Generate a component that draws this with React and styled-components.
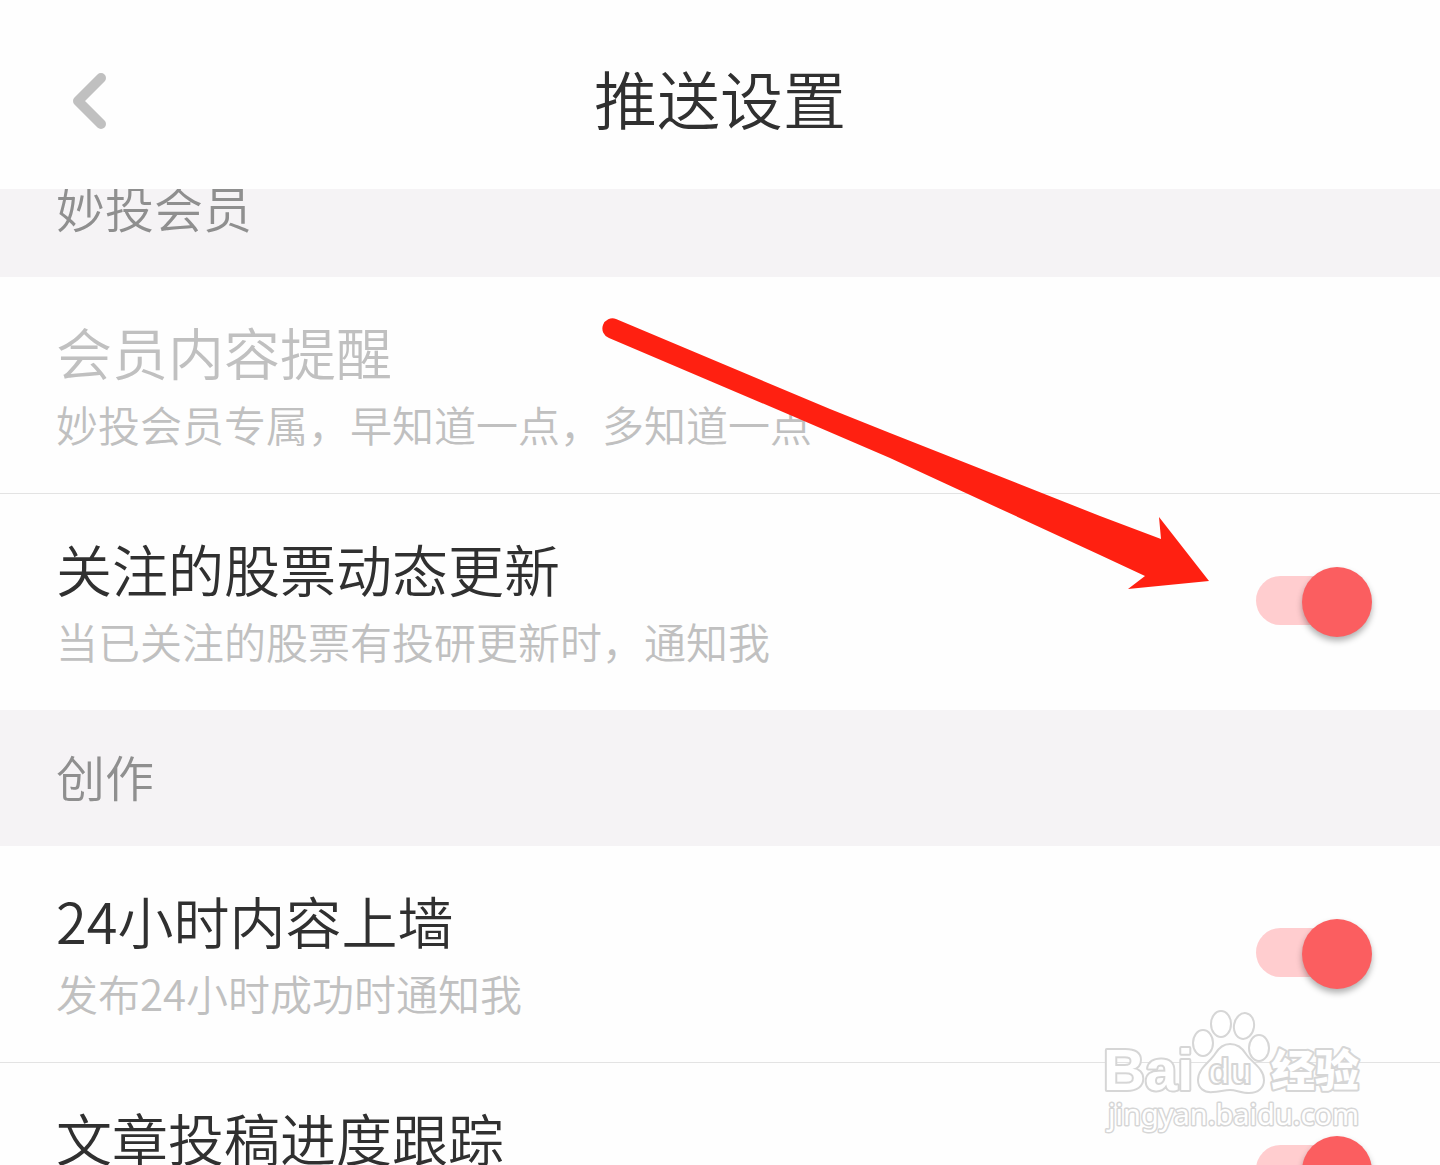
import React, { useState } from 'react';
import styled, { createGlobalStyle } from 'styled-components';

const GlobalStyle = createGlobalStyle`
  * {
    box-sizing: border-box;
  }
  body {
    margin: 0;
    background: #fff;
    font-family: 'Noto Sans CJK SC', sans-serif;
    font-weight: 350;
  }
`;

const Page = styled.div`
  position: relative;
  display: flex;
  flex-direction: column;
  height: 100vh;
  overflow: hidden;
`;

const Header = styled.header`
  display: grid;
  grid-template-columns: 64px 1fr 64px;
  align-items: center;
  flex: none;
  height: 189px;
  padding: 12px 58px 0;
  background: #fefefe;
  z-index: 1;
`;

const BackButton = styled.button`
  display: flex;
  align-items: center;
  justify-content: center;
  height: 80px;
  padding: 0;
  border: 0;
  background: none;
  cursor: pointer;
`;

const PageTitle = styled.h1`
  margin: 0;
  padding-bottom: 8px;
  color: #303030;
  font-size: 63px;
  font-weight: 350;
  line-height: 92px;
  text-align: center;
`;

// the list is scrolled a little way under the header
const List = styled.main`
  flex: none;
  margin-top: -48px;
`;

const SectionTitle = styled.h2`
  margin: 0;
  padding: 30px 56px 34px;
  background: #f5f3f5;
  color: #8f8f8f;
  font-size: 49px;
  font-weight: 350;
  line-height: 72px;
`;

const Row = styled.div`
  display: flex;
  align-items: center;
  justify-content: space-between;
  min-height: 216px;
  padding: 0 68px 0 56px;
  background: #fefefe;

  & + & {
    border-top: 1px solid #e3e3e3;
    min-height: 217px;
  }
`;

const RowText = styled.div`
  align-self: flex-start;
  padding: 32px 0 36px;
`;

const RowTitle = styled.label`
  display: block;
  color: ${(props) => (props.$disabled ? '#c0c0c0' : '#303030')};
  font-size: 56px;
  line-height: 84px;
`;

const RowHint = styled.p`
  margin: 0;
  color: #c0c0c0;
  font-size: 42px;
  line-height: 62px;
`;

const Switch = styled.input`
  appearance: none;
  display: grid;
  flex: none;
  align-items: center;
  width: 116px;
  height: 70px;
  margin: 0;
  cursor: pointer;

  &::before,
  &::after {
    content: '';
    grid-area: 1 / 1;
  }
  &::before {
    height: 49px;
    margin: 0 12px 3px 0;
    border-radius: 25px;
    background: #e0e0e0;
  }
  &::after {
    width: 70px;
    height: 70px;
    border-radius: 50%;
    background: #fafafa;
    box-shadow: 0 4px 6px rgba(0, 0, 0, 0.3);
  }
  &:checked::before {
    background: #ffcdcf;
  }
  &:checked::after {
    justify-self: end;
    background: #fb5e60;
  }
`;

const Arrow = styled.svg`
  position: absolute;
  top: 316px;
  left: 600px;
  z-index: 2;
  pointer-events: none;
`;

const Watermark = styled.svg`
  position: absolute;
  right: 70px;
  bottom: 25px;
  z-index: 2;
  pointer-events: none;
`;

const sections = [
  {
    title: '妙投会员',
    items: [
      {
        id: 'member',
        title: '会员内容提醒',
        hint: '妙投会员专属，早知道一点，多知道一点',
        disabled: true,
      },
      {
        id: 'stock',
        title: '关注的股票动态更新',
        hint: '当已关注的股票有投研更新时，通知我',
      },
    ],
  },
  {
    title: '创作',
    items: [
      {
        id: 'wall',
        title: '24小时内容上墙',
        hint: '发布24小时成功时通知我',
      },
      { id: 'progress', title: '文章投稿进度跟踪' },
    ],
  },
];

function SettingRow({ item }) {
  const [on, setOn] = useState(true);

  return (
    <Row>
      <RowText>
        <RowTitle
          as={item.disabled ? 'div' : 'label'}
          htmlFor={item.disabled ? undefined : item.id}
          $disabled={item.disabled}
        >
          {item.title}
        </RowTitle>
        {item.hint && <RowHint>{item.hint}</RowHint>}
      </RowText>
      {!item.disabled && (
        <Switch
          type="checkbox"
          role="switch"
          id={item.id}
          checked={on}
          onChange={(e) => setOn(e.target.checked)}
        />
      )}
    </Row>
  );
}

function BaiduWatermark() {
  return (
    <Watermark width="270" height="135" viewBox="1100 1005 270 135" aria-hidden="true">
      <g
        fill="#fff"
        stroke="#d6d6d6"
        strokeWidth="2"
        strokeLinejoin="round"
      >
        <g strokeWidth="4" paintOrder="stroke">
          <text x="1103" y="1090" fontFamily="Liberation Sans" fontWeight="700" fontSize="58">
            Bai
          </text>
          <text x="1271" y="1087" fontFamily="Noto Sans CJK SC" fontWeight="900" fontSize="44">
            经验
          </text>
        </g>
        <ellipse cx="1203" cy="1043" rx="10" ry="13" />
        <ellipse cx="1221" cy="1024" rx="10" ry="13" />
        <ellipse cx="1244" cy="1026" rx="10" ry="13" transform="rotate(10 1244 1026)" />
        <ellipse cx="1259" cy="1048" rx="10" ry="13" />
        <path d="M1230 1044c-8 0-12 5-15 10-4 7-17 14-17 26 0 8 6 13 15 12 6 0 11-2 17-2s12 3 19 3c9 0 15-5 15-13 0-12-13-18-18-26-3-5-8-10-16-10z" />
        <text x="1208" y="1084" fontFamily="Liberation Sans" fontWeight="700" fontSize="36">
          du
        </text>
        <text
          x="1108"
          y="1125"
          fontFamily="Noto Sans"
          fontWeight="400"
          fontSize="29"
          strokeWidth="3"
          paintOrder="stroke"
        >
          jingyan.baidu.com
        </text>
      </g>
    </Watermark>
  );
}

function App() {
  return (
    <Page>
      <GlobalStyle />
      <Header>
        <BackButton type="button" aria-label="返回">
          <svg width="34" height="56" viewBox="0 0 34 56" fill="none">
            <path
              d="M28 5L5 28l23 23"
              stroke="#c0c0c0"
              strokeWidth="10"
              strokeLinecap="round"
              strokeLinejoin="round"
            />
          </svg>
        </BackButton>
        <PageTitle>推送设置</PageTitle>
      </Header>
      <List>
        {sections.map((section) => (
          <section key={section.title}>
            <SectionTitle>{section.title}</SectionTitle>
            {section.items.map((item) => (
              <SettingRow key={item.id} item={item} />
            ))}
          </section>
        ))}
      </List>
      <Arrow width="612" height="276" viewBox="600 316 612 276" aria-hidden="true">
        <path
          d="M616 319L723 364L830 409L890 433L1100 516L1161 539L1159 517L1209 581L1128 589L1145 576L1100 555L890 458L790 415L609 338A10 10 0 0 1 616 319Z"
          fill="#ff2011"
        />
      </Arrow>
      <BaiduWatermark />
    </Page>
  );
}

export default App;
